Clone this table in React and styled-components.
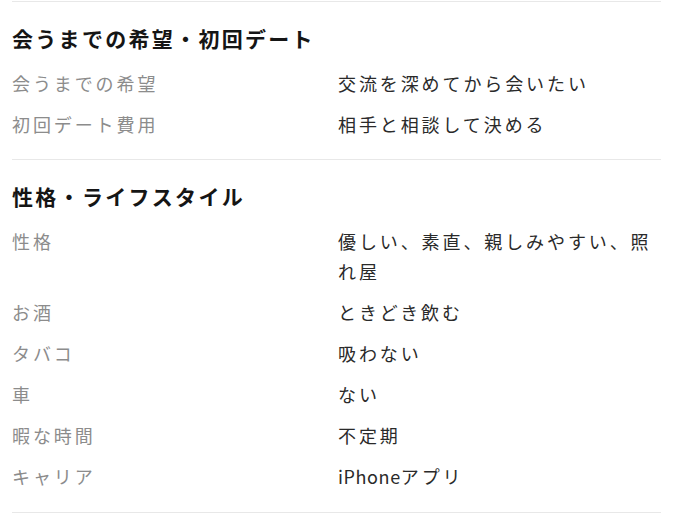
import React from "react";
import styled, { createGlobalStyle } from "styled-components";

const Global = createGlobalStyle`
  html, body { margin: 0; padding: 0; background: #fff; }
  body {
    font-family: "Noto Sans CJK JP", "Noto Sans", sans-serif;
    -webkit-font-smoothing: antialiased;
  }
`;

const Page = styled.div`
  width: 649px;
  padding: 1px 0 0 12px;
`;

const Section = styled.section`
  border-top: 1px solid #e8e8e8;
  padding: 20px 0 20px;
  display: flex;
  flex-direction: column;
  gap: 11px;
  &:last-child {
    border-bottom: 1px solid #e8e8e8;
    padding-bottom: 21px;
  }
`;

const Heading = styled.h2`
  margin: 0 0 3px;
  font-size: 21px;
  line-height: 32px;
  font-weight: 700;
  letter-spacing: 2.3px;
  color: #151515;
`;

const Row = styled.div`
  display: grid;
  grid-template-columns: 326px 1fr;
  font-size: 18px;
  line-height: 30px;
  letter-spacing: 2.9px;
`;

const Label = styled.div`
  color: #8c8c8c;
`;

const Value = styled.div`
  color: #2a2a2a;
`;

const Latin = styled.span`
  letter-spacing: 0.6px;
`;

const renderValue = (v) => {
  const parts = v.split(/([A-Za-z]+)/);
  return parts.map((p, i) =>
    /^[A-Za-z]+$/.test(p) ? <Latin key={i}>{p}</Latin> : p
  );
};

const sections = [
  {
    title: "会うまでの希望・初回デート",
    rows: [
      ["会うまでの希望", "交流を深めてから会いたい"],
      ["初回デート費用", "相手と相談して決める"],
    ],
  },
  {
    title: "性格・ライフスタイル",
    rows: [
      ["性格", "優しい、素直、親しみやすい、照れ屋"],
      ["お酒", "ときどき飲む"],
      ["タバコ", "吸わない"],
      ["車", "ない"],
      ["暇な時間", "不定期"],
      ["キャリア", "iPhoneアプリ"],
    ],
  },
];

export default function App() {
  return (
    <>
      <Global />
      <Page>
        {sections.map((s) => (
          <Section key={s.title}>
            <Heading>{s.title}</Heading>
            {s.rows.map(([k, v]) => (
              <Row key={k}>
                <Label>{k}</Label>
                <Value>{renderValue(v)}</Value>
              </Row>
            ))}
          </Section>
        ))}
      </Page>
    </>
  );
}
